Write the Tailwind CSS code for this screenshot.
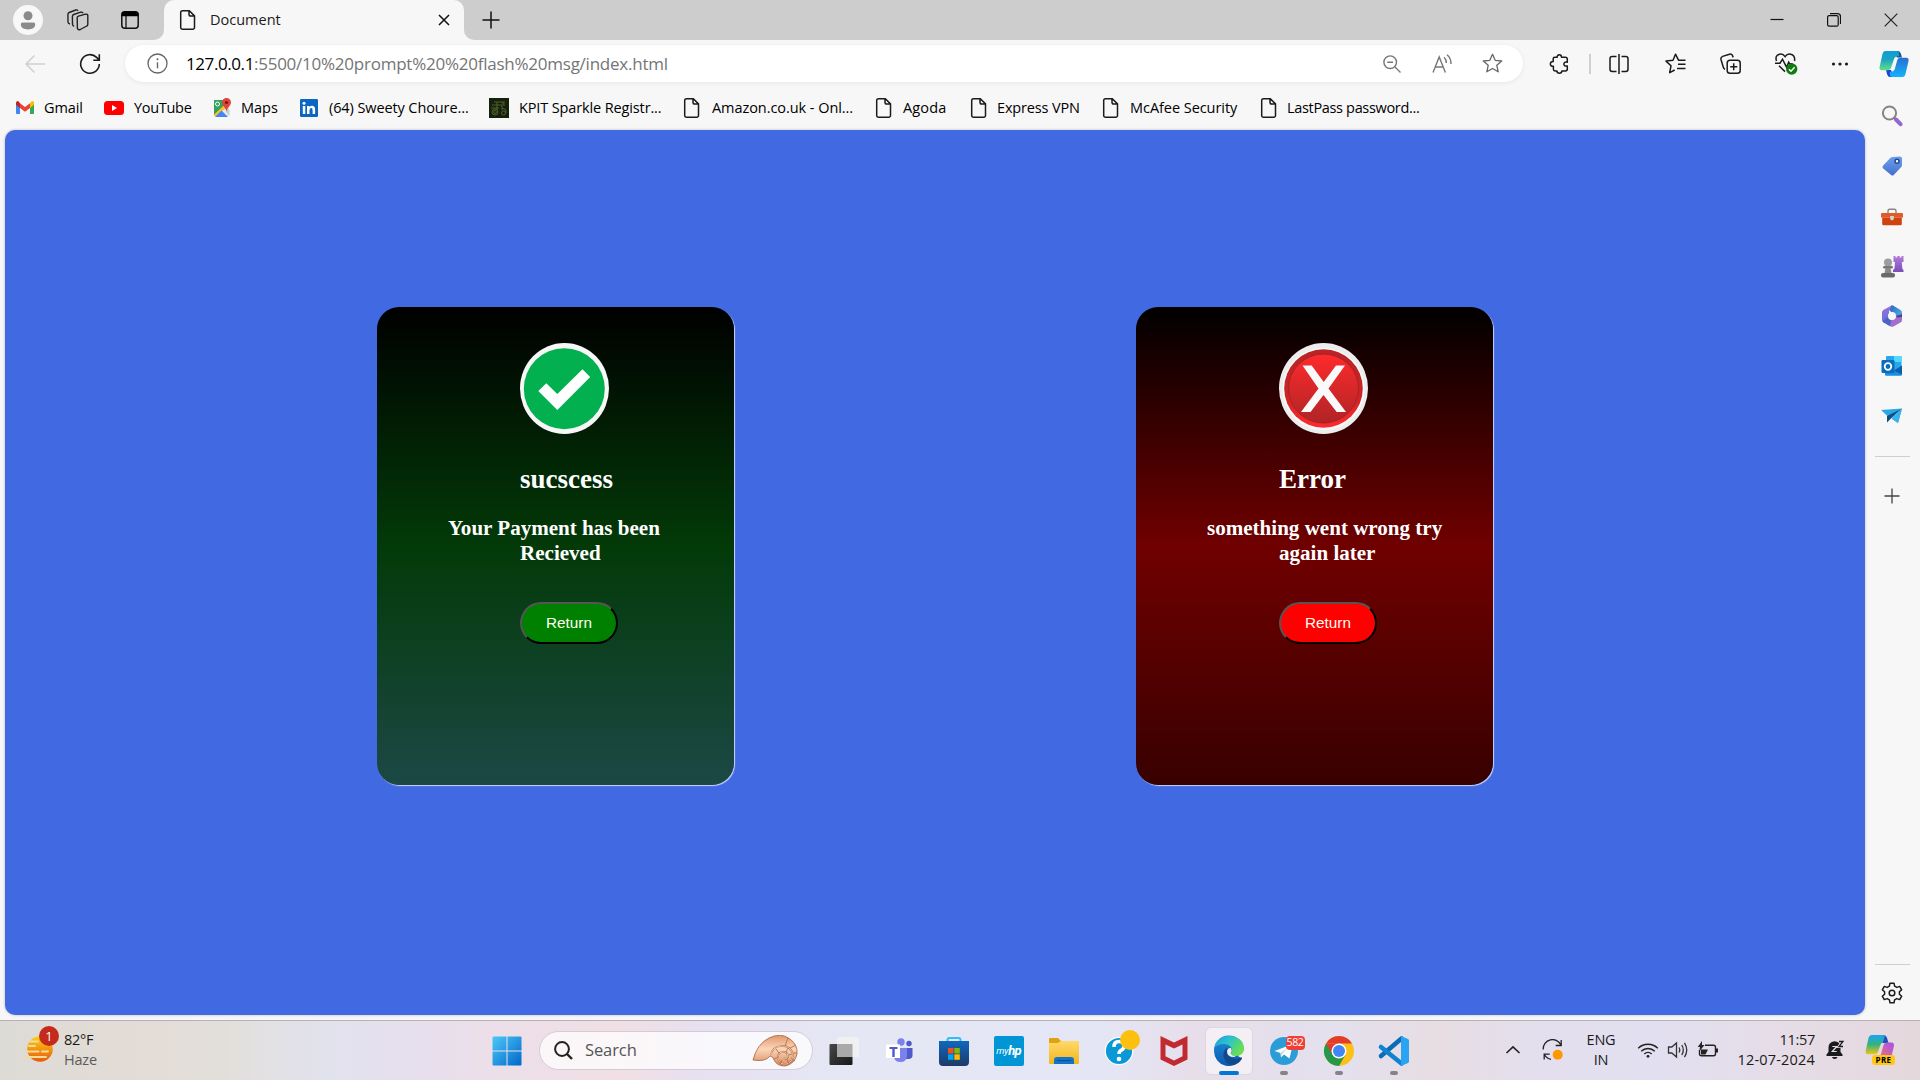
<!DOCTYPE html>
<html lang="en">
<head>
<meta charset="utf-8">
<title>Document</title>
<script src="https://cdn.jsdelivr.net/npm/@tailwindcss/browser@4"></script>
</head>
<body class="flex h-[1080px] w-[1920px] flex-col overflow-hidden bg-[#f7f7f7] font-['Open_Sans',sans-serif] text-[14.5px] text-[#1b1b1b]">

<svg class="hidden">
  <symbol id="doc" viewBox="0 0 20 22"><path d="M4.5 1.7h6.8l5.2 5.2v11.6a1.8 1.8 0 0 1-1.8 1.8H4.5a1.8 1.8 0 0 1-1.8-1.8v-15a1.8 1.8 0 0 1 1.8-1.8z M11 1.9v3.4a1.8 1.8 0 0 0 1.8 1.8h3.5" fill="none" stroke="#1b1b1b" stroke-width="1.5"/></symbol>
</svg>

<!-- Tab strip -->
<header class="flex h-10 shrink-0 bg-[#cdcdcd]">
  <div class="flex w-14 items-center justify-center">
    <svg class="size-[30px]" viewBox="0 0 30 30"><circle cx="15" cy="15" r="15" fill="#f8f8f8"/><circle cx="15" cy="10.7" r="4.5" fill="#8b8b8b"/><path d="M7.800 19.500a1.800 1.800 0 0 1 1.800-2h10.800a1.800 1.800 0 0 1 1.800 2c0 3.200-3.200 4.900-7.200 4.900s-7.200-1.700-7.200-4.900z" fill="#8b8b8b"/></svg>
  </div>
  <div class="flex w-11 items-center justify-center">
    <svg class="size-[22px]" viewBox="0 0 22 22" fill="none" stroke="#222" stroke-width="1.4" stroke-linejoin="round"><path d="M10.200 8.500q.2-1 1.200-1.300l7.200-2q2.100-.3 2.200 1.400v8.700q0 1.200-1 1.700l-6.500 3.500q-2.200.8-2.900-1z"/><path d="M7.200 17.300q-1.500-.4-1.700-1.800l-.1-8q0-1.500 1.300-2l7-2.300q1.700-.4 2.400 1"/><path d="M3 15q-1.900-.4-2-2l-.1-7.500q0-1.500 1.300-2l6.500-2.500q1.600-.4 2.300.8"/></svg>
  </div>
  <div class="flex w-[54px] items-center pl-[21px]">
    <svg class="size-[18px]" viewBox="0 0 18 18"><rect x=".8" y=".8" width="16.400" height="16.400" rx="3" fill="none" stroke="#111" stroke-width="1.500"/><path d="M.5 5.300V3.500a3 3 0 0 1 3-3h11a3 3 0 0 1 3 3v1.800z" fill="#000"/><path d="M5 5v12" stroke="#111" stroke-width="1.300"/></svg>
  </div>
  <svg class="size-2.5 self-end" viewBox="0 0 10 10"><path d="M10 0v10H0A10 10 0 0 0 10 0z" fill="#f7f7f7"/></svg>
  <div class="flex w-[300px] items-center rounded-t-[10px] bg-[#f7f7f7] pl-[14px]">
    <svg class="h-[22px] w-5"><use href="#doc"/></svg>
    <span class="ml-3 flex-1">Document</span>
    <svg class="mr-[14px] size-3" viewBox="0 0 12 12"><path d="M1 1l10 10M11 1L1 11" stroke="#111" stroke-width="1.500"/></svg>
  </div>
  <svg class="size-2.5 self-end" viewBox="0 0 10 10"><path d="M0 0v10h10A10 10 0 0 1 0 0z" fill="#f7f7f7"/></svg>
  <div class="flex w-[33px] items-center justify-center">
    <svg class="size-[18px]" viewBox="0 0 18 18"><path d="M9 .5v17M.5 9h17" stroke="#111" stroke-width="1.500"/></svg>
  </div>
  <div class="ml-auto flex">
    <div class="flex w-[57.3px] items-center justify-center"><svg class="size-3.5" viewBox="0 0 14 14"><path d="M.5 6.500h13" stroke="#111" stroke-width="1.200"/></svg></div>
    <div class="flex w-[57.3px] items-center justify-center"><svg class="size-3.5" viewBox="0 0 14 14" fill="none" stroke="#111" stroke-width="1.200"><rect x=".6" y="2.600" width="10.600" height="10.600" rx="1.500"/><path d="M3 .7h7.500q3 0 3 3V11"/></svg></div>
    <div class="flex w-[57.3px] items-center justify-center"><svg class="size-3.5" viewBox="0 0 14 14"><path d="M.7.7l12.600 12.600M13.300.7L.7 13.300" stroke="#222" stroke-width="1.200"/></svg></div>
  </div>
</header>

<!-- Toolbar -->
<div class="flex h-[47px] shrink-0 items-center">
  <div class="flex w-[70px] justify-center"><svg class="size-5" viewBox="0 0 20 20"><path d="M20 10H1M9.500 1.500L1 10l8.500 8.500" fill="none" stroke="#cfcfcf" stroke-width="1.500"/></svg></div>
  <div class="flex w-10 justify-center"><svg class="size-[22px]" viewBox="0 0 22 22"><path d="M20.300 11a9.300 9.300 0 1 1-2.700-6.600L20 6.800M20.300 1.200v6h-6" fill="none" stroke="#1b1b1b" stroke-width="1.600"/></svg></div>
  <div class="ml-[15px] flex h-[37px] w-[1398px] items-center rounded-full bg-white pr-[6px] pl-[22px] shadow-[0_1px_5px_rgba(0,0,0,0.07)]">
    <svg class="size-[21px]" viewBox="0 0 21 21"><circle cx="10.500" cy="10.500" r="9.500" fill="none" stroke="#666" stroke-width="1.300"/><path d="M10.500 9.300v6" stroke="#666" stroke-width="1.400"/><circle cx="10.500" cy="6.300" r="1" fill="#666"/></svg>
    <div class="ml-[18px] flex flex-1 text-[17px] leading-6"><span class="tracking-[-0.42px] text-black">127.0.0.1</span><span class="tracking-[-0.24px] text-[#757575]">:5500/10%20prompt%20%20flash%20msg/index.html</span></div>
    <div class="flex w-[50px] justify-center"><svg class="size-[18px]" viewBox="0 0 18 18" fill="none" stroke="#777" stroke-width="1.400"><circle cx="7.200" cy="7.200" r="6.300"/><path d="M12 12l5.500 5.500M4.300 7.200h5.800"/></svg></div>
    <div class="flex w-[50px] justify-center"><svg class="h-5 w-[22px]" viewBox="0 0 22 20" fill="none" stroke="#777" stroke-width="1.400"><path d="M2 18.500L8.200 3l6.200 15.500M4.300 13h7.800M13 3.200q2.500 2.300 2.300 5.800M16 .8q4.300 3.300 4 9.200"/></svg></div>
    <div class="flex w-[50px] justify-center"><svg class="size-[21px]" viewBox="0 0 21 21"><path d="M10.500 1.300l2.700 6 6.500.7-4.900 4.300 1.400 6.500-5.700-3.300-5.700 3.300 1.400-6.500L1.300 8l6.500-.7z" fill="none" stroke="#666" stroke-width="1.300" stroke-linejoin="round"/></svg></div>
  </div>
  <div class="flex w-[66px] pl-[26px]"><svg class="size-5" viewBox="0 0 20 20"><path d="M4.200 4.800q0-1.500 1.500-1.500h2.500q-.1-2.500 2.100-2.500t2.200 2.500h3.800q2 0 2 2v2.900q-3.400-.6-3.400 1.900t3.400 1.900v3q0 1.900-1.900 1.900h-3.500q-.1 2.300-2.500 2.300t-2.500-2.300H6.100q-1.700 0-1.700-1.700v-2.900Q1.400 12.500 1.400 10t2.800-2.400z" fill="none" stroke="#1b1b1b" stroke-width="1.500" stroke-linejoin="round"/></svg></div>
  <div class="h-5 w-[2px] bg-[#d0d0d0]"></div>
  <div class="flex w-[57px] justify-center"><svg class="-ml-px size-5" viewBox="0 0 20 20" fill="none" stroke="#1b1b1b" stroke-width="1.500"><path d="M7.500 2.500H3.200Q1 2.500 1 4.700v10.600q0 2.200 2.200 2.200h4.300M12.500 2.500h4.300q2.200 0 2.200 2.200v10.600q0 2.200-2.200 2.200h-4.300M10 0v20"/></svg></div>
  <div class="flex w-[55px] justify-center"><svg class="-ml-px size-[21px]" viewBox="0 0 21 21" fill="none" stroke="#1b1b1b" stroke-width="1.500" stroke-linejoin="round"><path d="M20.500 7.200h-7L10.500 1.200 8 7.200l-7 .9 5 4.700-1.300 6.900 5-2.700M13 11.200h7.500M12 15.500h8.500"/></svg></div>
  <div class="flex w-[55px] justify-center"><svg class="-ml-px size-[21px]" viewBox="0 0 21 21" fill="none" stroke="#1b1b1b" stroke-width="1.500"><rect x="7.200" y="7.200" width="13" height="13" rx="2.800"/><path d="M13.700 10.200v7M10.200 13.700h7M5 16.200q-1.300-.5-1.700-2L1 6.500Q.5 4.200 2.600 3.400L9.500 1.200q2-.5 2.900 1.200l.8 2"/></svg></div>
  <div class="flex w-[55px] justify-center"><svg class="size-6" viewBox="0 0 24 24"><path d="M2.500 9Q.7 3.500 5.500 2.200q3.500-.7 5.600 2.500 2.100-3.200 5.600-2.500Q21.500 3.500 20.500 9M5 13.800l6 5.800M1 11.200h5l2.500-4 4 8 2.200-5 1 1.600h3" fill="none" stroke="#1b1b1b" stroke-width="1.500"/><circle cx="17.700" cy="17" r="5.700" fill="#107c10"/><path d="M15 17.200l2 2 3.600-4" fill="none" stroke="#fff" stroke-width="1.500"/></svg></div>
  <div class="flex w-[55px] justify-center"><svg class="-ml-px size-5" viewBox="0 0 20 20" fill="#1b1b1b"><circle cx="3.500" cy="10" r="1.600"/><circle cx="10" cy="10" r="1.600"/><circle cx="16.500" cy="10" r="1.600"/></svg></div>
  <div class="flex w-[52px] justify-center"><svg class="-ml-px h-7 w-[30px]" viewBox="0 0 30 28">
    <defs>
      <linearGradient id="ca" x1="0" y1="0" x2="0" y2="1"><stop offset="0" stop-color="#109ad9"/><stop offset=".45" stop-color="#1ba5c0"/><stop offset="1" stop-color="#63e08a"/></linearGradient>
      <linearGradient id="cb" x1="0" y1="0" x2="0" y2="1"><stop offset="0" stop-color="#2a6fd0"/><stop offset="1" stop-color="#14b4fb"/></linearGradient>
    </defs>
    <path d="M14 1h5q2 0 2.800 2.500l1.200 4h-5z" fill="#0d5c94"/><path d="M7 20h5l2.500 7H11q-2 0-2.800-2.500z" fill="#1b45dc"/>
    <path d="M6.500 1H18q1.500 0 1.800 1.500L20 6q-4 0-5 3l-3 9q-.8 2.200-3 2.200H2.500Q0 20 .6 17L3.500 4q.7-3 3-3z" fill="url(#ca)"/>
    <path d="M23.500 27H13q-1.500 0-2-1.500L10.800 22q4 0 5-3l2.500-9q.8-2.200 3-2.200h6q2.700 0 2.200 3.200L26.500 24q-.7 3-3 3z" fill="url(#cb)"/>
  </svg></div>
</div>

<!-- Bookmarks, page and sidebar -->
<div class="flex h-[933px] shrink-0">
  <div class="flex w-[1865px] flex-col">
    <nav class="flex h-[43px] shrink-0 items-center pb-[2px] pl-[15px] whitespace-nowrap text-black">
      <div class="flex w-[89px] items-center"><svg class="h-[15px] w-5" viewBox="0 0 20 15"><path d="M1 2.500v10.700q0 .8.800.8H5V7.500z" fill="#4285f4"/><path d="M19 2.500v10.700q0 .8-.8.8H15V7.500z" fill="#34a853"/><path d="M15 3.200l1.300-1.600Q17.500.7 18.500 1.500q.5.500.5 1.500v1.800L15 8z" fill="#fbbc04"/><path d="M5 8V3.200l5 3.700 5-3.700V8l-5 3.800z" fill="#ea4335"/><path d="M1 3q0-1 .6-1.500Q2.500.7 3.700 1.600L5 3.200V8L1 4.800z" fill="#c5221f"/></svg><span class="ml-[9px] tracking-[-0.1px]">Gmail</span></div>
      <div class="flex w-[108px] items-center"><svg class="h-3.5 w-5" viewBox="0 0 20 14"><rect width="20" height="14" rx="3.500" fill="#f00"/><path d="M8 4l5 3-5 3z" fill="#fff"/></svg><span class="ml-[10px] tracking-[-0.3px]">YouTube</span></div>
      <div class="flex w-[87px] items-center"><svg class="size-5" viewBox="0 0 20 20"><path d="M2 2h11v6l-11 10z" fill="#34a05c"/><path d="M2 18L13 8l4 2v8z" fill="#e8e8e8"/><path d="M1.500 17L14 5.500l2 2.500L4 18.500z" fill="#fbc02d"/><path d="M3 19l6.500-6.500L16 19z" fill="#4285f4"/><path d="M14 14V8l3.500 4v6z" fill="#c6cfd8"/><circle cx="5.500" cy="6" r="2" fill="none" stroke="#fff" stroke-width="1"/><path d="M14.500 0a4.500 4.500 0 0 1 4.500 4.500c0 3-3.500 4.500-4.500 9-1-4.500-4.500-6-4.500-9A4.500 4.500 0 0 1 14.500 0z" fill="#e0443a"/><circle cx="14.500" cy="4.500" r="1.600" fill="#811411"/></svg><span class="ml-[9px]">Maps</span></div>
      <div class="flex w-[190px] items-center pl-px"><svg class="size-[18px]" viewBox="0 0 18 18"><rect width="18" height="18" rx="1.200" fill="#0a66c2"/><path d="M2.800 7h2.500v8H2.800zM7 7h2.400v1.100q.8-1.300 2.500-1.300 3.200 0 3.200 3.700V15h-2.500v-4q0-2-1.400-2T9.500 11v4H7z" fill="#fff"/><circle cx="4" cy="4.200" r="1.500" fill="#fff"/></svg><span class="ml-[11px] tracking-[-0.1px]">(64) Sweety Choure...</span></div>
      <div class="flex w-[194px] items-center"><svg class="size-5" viewBox="0 0 20 20"><rect width="20" height="20" fill="#17200f"/><g fill="none" stroke="#58702a" stroke-width=".8"><circle cx="6" cy="14" r="3"/><circle cx="6" cy="14" r="1.500"/><circle cx="14.500" cy="15" r="2"/><path d="M3 7h10v5M5 4h9v3M8 4v8M13 10l4 2v3M2 10h8M15 3v5"/></g></svg><span class="ml-[10px] tracking-[-0.13px]">KPIT Sparkle Registr...</span></div>
      <div class="flex w-[192px] items-center"><svg class="-ml-px h-[22px] w-5"><use href="#doc"/></svg><span class="ml-[10px] tracking-[-0.06px]">Amazon.co.uk - Onl...</span></div>
      <div class="flex w-[95px] items-center"><svg class="-ml-px h-[22px] w-5"><use href="#doc"/></svg><span class="ml-[9px] tracking-[0.15px]">Agoda</span></div>
      <div class="flex w-[132px] items-center"><svg class="-ml-px h-[22px] w-5"><use href="#doc"/></svg><span class="ml-[8px] tracking-[-0.15px]">Express VPN</span></div>
      <div class="flex w-[158px] items-center"><svg class="-ml-px h-[22px] w-5"><use href="#doc"/></svg><span class="ml-[9px] tracking-[-0.05px]">McAfee Security</span></div>
      <div class="flex items-center"><svg class="-ml-px h-[22px] w-5"><use href="#doc"/></svg><span class="ml-[8px] tracking-[-0.33px]">LastPass password...</span></div>
    </nav>

    <main class="ml-[5px] flex h-[885px] items-start gap-[402px] rounded-[10px] bg-[royalblue] pt-[177px] pl-[372px] font-['Liberation_Serif',serif] font-bold text-white shadow-[0_0_3px_rgba(0,0,0,0.25)]">
      <section class="h-[478px] w-[357px] rounded-[22px] bg-linear-to-b/srgb from-black via-[#033a08] to-[#1c4845] pt-[35.500px] pl-[143px] shadow-[1px_1px_1px_#cdd7f8]">
        <svg class="h-[91px] w-[89px]" viewBox="0 0 89 91"><ellipse cx="44.500" cy="45.500" rx="44.500" ry="45.500" fill="#f7f7f7"/><ellipse cx="44.300" cy="45.700" rx="40.500" ry="40.500" fill="#03b050"/><path d="M18.300 48l8-7.800L37.300 51 62.500 26.200l7.700 7.700L37.300 67z" fill="#fff"/></svg>
        <h1 class="mt-[30.500px] text-[27px] leading-[31px]">sucscess</h1>
        <h3 class="mt-[21px] w-[160px] -indent-[72px] text-[21.06px] leading-[25px]"><span class="whitespace-nowrap">Your Payment has been</span><br>Recieved</h3>
        <button class="mt-[36px] h-[42px] w-[98px] rounded-[22px] border-2 border-t-[#555] border-r-black border-b-black border-l-[#555] bg-[green] font-['Liberation_Sans',sans-serif] text-[15.3px] font-normal text-[#fffff0]">Return</button>
      </section>
      <section class="h-[478px] w-[357px] rounded-[22px] bg-linear-to-b/srgb from-black via-[#700000] to-[#380000] pt-[35.500px] pl-[143px] shadow-[1px_1px_1px_#cdd7f8]">
        <svg class="h-[91px] w-[89px]" viewBox="0 0 89 91">
          <defs>
            <linearGradient id="er" x1="0" y1="0" x2="0" y2="1"><stop offset="0" stop-color="#b82426"/><stop offset=".6" stop-color="#cc2426"/><stop offset="1" stop-color="#ff2a2a"/></linearGradient>
            <linearGradient id="ei" x1="0" y1="0" x2="0" y2="1"><stop offset="0" stop-color="#ff2a2c"/><stop offset="1" stop-color="#b02426"/></linearGradient>
          </defs>
          <ellipse cx="44.500" cy="45.500" rx="44.500" ry="45.500" fill="#ededed"/><ellipse cx="44.500" cy="46" rx="41" ry="41" fill="#fafafa"/><ellipse cx="44.500" cy="45.500" rx="39.300" ry="39.300" fill="url(#er)"/><ellipse cx="44.500" cy="45.500" rx="35" ry="34.500" fill="url(#ei)" stroke="#a82224" stroke-width="1"/>
          <path d="M23.500 22.500h9.200l12 16.500L57 22.500h9L49.500 45.500 67 69h-9.300L44.500 52 31.500 69H22L39.500 45.500z" fill="#fafafa"/>
        </svg>
        <h1 class="mt-[30.500px] text-[27px] leading-[31px]">Error</h1>
        <h3 class="mt-[21px] w-[160px] -indent-[72px] text-[21.06px] leading-[25px]"><span class="whitespace-nowrap">something went wrong try</span><br><span class="whitespace-nowrap">again later</span></h3>
        <button class="mt-[36px] h-[42px] w-[98px] rounded-[22px] border-2 border-t-[#555] border-r-black border-b-black border-l-[#555] bg-[red] font-['Liberation_Sans',sans-serif] text-[15.3px] font-normal text-[#fffff0]">Return</button>
      </section>
    </main>
  </div>

  <!-- Sidebar -->
  <aside class="flex w-[55px] flex-col items-center pt-[4px] pr-px">
    <div class="flex h-[50px] items-center"><svg class="size-[22px]" viewBox="0 0 22 22"><circle cx="8.500" cy="8" r="6.600" fill="none" stroke="#858585" stroke-width="2"/><path d="M13 12.500l2.500 2.500" stroke="#777" stroke-width="2"/><path d="M15 14.500l4.500 4.700" stroke="#9566cf" stroke-width="4" stroke-linecap="round"/></svg></div>
    <div class="flex h-[50px] items-center"><svg class="size-[22px]" viewBox="0 0 22 22"><defs><linearGradient id="tg" x1="0" y1="0" x2="0" y2="1"><stop offset="0" stop-color="#6ba0ec"/><stop offset="1" stop-color="#456fcd"/></linearGradient></defs><path d="M11.500 2l7.500-.5q2 0 2 2V10q0 1-.8 2l-7.500 8q-1.300 1.200-2.600 0L2.200 13.500q-1.400-1.300-.2-2.700l7.500-8q.9-.8 2-.8z" fill="url(#tg)"/><circle cx="16" cy="6.300" r="2" fill="#fff" stroke="#24468f" stroke-width="1.500"/></svg></div>
    <div class="flex h-[50px] items-center"><svg class="mt-px size-[22px]" viewBox="0 0 22 22"><path d="M7 8V5q0-1.700 1.700-1.700h4.600Q15 3.300 15 5v3" fill="none" stroke="#858585" stroke-width="1.400"/><path d="M1 7h20q1 0 1 1v3.500H0V8q0-1 1-1z" fill="#e2592a"/><path d="M1.200 11.500h19.600v6.300q0 1.500-1.500 1.500H2.700q-1.500 0-1.500-1.500z" fill="#cf430f"/><path d="M9.200 10h3.600v3.200l-1.800 1.300-1.800-1.300z" fill="#d5d5d5"/></svg></div>
    <div class="flex h-[50px] items-center"><svg class="mt-px size-6" viewBox="0 0 24 24"><defs><linearGradient id="rk" x1="0" y1="0" x2="0" y2="1"><stop offset="0" stop-color="#b47bdc"/><stop offset="1" stop-color="#7a4fb8"/></linearGradient></defs><path d="M13.500 1h2v1.500h1.800V1h2.400v1.500h1.800V1h2v6h-1.700l.5 6.500 1.200 1.500v2H13v-2l1.500-1.500L15 7h-1.500z" fill="url(#rk)"/><circle cx="8" cy="7.500" r="4" fill="#9d9d9d"/><rect x="3" y="11" width="10" height="2.500" rx="1.200" fill="#777"/><path d="M5.500 13h5l1 5h-7z" fill="#8a8a8a"/><rect x="1" y="18" width="14" height="4.500" rx="2" fill="#6a6a6a"/></svg></div>
    <div class="flex h-[50px] items-center"><svg class="size-[22px]" viewBox="0 0 22 22"><defs><linearGradient id="m1" x1="0" y1="0" x2="1" y2="1"><stop offset="0" stop-color="#2f5fc0"/><stop offset="1" stop-color="#4fc3f4"/></linearGradient><linearGradient id="m2" x1="0" y1="0" x2="0" y2="1"><stop offset="0" stop-color="#9c6fdd"/><stop offset="1" stop-color="#5f6fd6"/></linearGradient></defs><path d="M10.500.3q.7-.2 1.500.2l7.500 4.500q1.500 1 1.500 2.500v8l-6.500-4.500L8 5z" fill="url(#m1)"/><path d="M10.500.4L8 5.500V13l1.500 7.500L2.500 17Q1 16 1 14.500v-7q0-1.500 1.300-2.500z" fill="url(#m2)"/><path d="M1.500 16l8.500-1 5-3 6-1v4q0 1.500-1.500 2.500l-7 4q-1.500.7-3 0l-7-4z" fill="#a070cf"/><path d="M1.300 16L8 11.500l2 4-1 5.500-6.500-3.800z" fill="#4a63c9"/><path d="M15 11l6-2v3l-5 .5z" fill="#5a3f8f"/><circle cx="11" cy="11" r="4" fill="#f7f7f7"/></svg></div>
    <div class="flex h-[50px] items-center"><svg class="size-[22px]" viewBox="0 0 22 22"><rect x="5" y="1" width="15.500" height="14" rx="1.200" fill="#28a8ea"/><path d="M13 1h7.500v6H13z" fill="#50d9ff"/><path d="M4 11l8.500 5L21 10.500v9q0 1.300-1.300 1.300H5.300Q4 20.800 4 19.500z" fill="#1490df"/><path d="M21 10.500v9L13 15.500z" fill="#0b5fa8"/><rect x=".5" y="5" width="13" height="13" rx="1.300" fill="#0a6cbd"/><circle cx="7" cy="11.500" r="3.300" fill="none" stroke="#fff" stroke-width="1.800"/></svg></div>
    <div class="flex h-[50px] items-center"><svg class="h-4 w-[22px]" viewBox="0 0 22 16"><path d="M0 2L21 .5 7.500 9z" fill="#2ba7e6"/><path d="M21 .5L17 15l-6-4z" fill="#1d9be0"/><path d="M21 .5L6 8v6.500l4-4z" fill="#0c4f84"/><path d="M10.500 10L21 .5 17 15z" fill="#35b4f0"/></svg></div>
    <div class="mt-[15px] h-px w-[35px] bg-[#cfcfcf]"></div>
    <svg class="mt-[31px] size-4" viewBox="0 0 16 16"><path d="M8 .5v15M.5 8h15" stroke="#444" stroke-width="1.300"/></svg>
    <div class="mt-auto h-px w-[35px] bg-[#cfcfcf]"></div>
    <svg class="mt-[17px] mb-[16px] size-[22px]" viewBox="0 0 22 22" fill="none" stroke="#1b1b1b" stroke-width="1.500" stroke-linejoin="round"><path d="M9 1.200h4l.6 3 2.200 1.200 2.900-1 2 3.400-2.300 2v2.400l2.300 2-2 3.400-2.900-1-2.200 1.200-.6 3H9l-.6-3-2.200-1.200-2.900 1-2-3.400 2.300-2V9.800l-2.300-2 2-3.400 2.900 1 2.200-1.200z"/><circle cx="11" cy="11" r="2.800"/></svg>
  </aside>
</div>

<!-- Taskbar -->
<footer class="flex h-[60px] items-center border-t border-[#b4b2b5] bg-[linear-gradient(90deg,#dddbd6_0px,#e4dcd6_150px,#e2dfda_220px,#e2e2ee_330px,#e6dfee_410px,#ecdfe9_490px,#f1dfe4_620px,#e7e0f0_700px,#e5e7f5_850px,#e4e6f5_1100px,#e7deea_1190px,#e4e0ee_1340px,#e7dde2_1440px,#e3dfee_1540px,#e2dff0_1660px,#e6dce6_1800px,#e4d8dc_1920px)]">
  <div class="flex w-[492px] items-center pb-px pl-[24px]">
    <div class="relative h-12 w-[40px]">
      <svg class="h-12 w-9" viewBox="0 0 36 48"><defs><linearGradient id="sun" x1="0" y1="0" x2="0" y2="1"><stop offset="0" stop-color="#fcd116"/><stop offset="1" stop-color="#e8590c"/></linearGradient></defs><circle cx="16" cy="23" r="12.800" fill="url(#sun)"/><g stroke="#f6dc9a" stroke-width="1.900" stroke-linecap="round"><path d="M6 15.500h8M5 20h6M2.500 25.500h12M18 25.500h6M2 31h20"/></g></svg>
      <div class="absolute top-0 left-[15px] flex size-5 items-center justify-center rounded-full bg-[#c42b1c] text-[13px] leading-none text-white">1</div>
    </div>
    <div class="-mt-px leading-5"><div class="tracking-[-0.3px]">82°F</div><div class="tracking-[-0.2px] text-[#5a5a5a]">Haze</div></div>
  </div>
  <svg class="size-[30px]" viewBox="0 0 30 30"><defs><linearGradient id="win" x1="0" y1="0" x2="1" y2="1"><stop offset="0" stop-color="#4cc9fa"/><stop offset="1" stop-color="#0067c8"/></linearGradient></defs><path d="M1.500.5H14.500V14.500H.5V1.500q0-1 1-1zM15.500.5h13q1 0 1 1v13h-14zM.5 15.500h14v14h-13q-1 0-1-1zM15.500 15.500h14v13q0 1-1 1h-13z" fill="url(#win)"/></svg>
  <div class="ml-[17px] flex h-[39px] w-[274px] items-center rounded-full border border-[#d3ccd6] bg-white/75 pl-[14px]">
    <svg class="size-[19px]" viewBox="0 0 19 19"><circle cx="8" cy="8" r="6.900" fill="none" stroke="#222" stroke-width="2"/><path d="M13 13l5 5" stroke="#222" stroke-width="2.400"/></svg>
    <span class="ml-3 flex-1 text-[16.5px] tracking-[-0.1px] text-[#555]">Search</span>
    <svg class="mr-[14px] h-8 w-[46px]" viewBox="0 0 46 32"><defs><linearGradient id="sh" x1="0" y1="0" x2="0" y2="1"><stop offset="0" stop-color="#e0976c"/><stop offset=".45" stop-color="#fbd6b8"/><stop offset="1" stop-color="#d98a60"/></linearGradient></defs><path d="M1 25Q5 9 17 3T38 4q8 6 7 15-2 10-12 12-8 0-11-6-1-4-4-4-4 6-17 4z" fill="url(#sh)" stroke="#a8623c" stroke-width=".8"/><path d="M19 20Q20 12 29 11t12 8q0 8-6 10-7 1-9-5-1-6 4-7t6 4q-1 4-4 2" fill="none" stroke="#a85b37" stroke-width="1.600"/><path d="M19 20Q20 12 29 11t12 8q0 8-6 10-7 1-9-5-1-6 4-7t6 4q-1 4-4 2" fill="none" stroke="#fdecd8" stroke-width=".8"/><path d="M33 11l3-8M38 13l6-3M41 18h4M40 24l3 2M35 24l2 5M30 25l-2 4M26 22l-4 2M27 18l-3-4M34 17l2-4M37 20l3-1" stroke="#b0683f" stroke-width=".8"/></svg>
  </div>

  <div class="ml-[3px] flex h-full items-center">
    <div class="flex w-[55px] justify-center"><svg class="size-12" viewBox="0 0 48 48"><defs><linearGradient id="tv" x1="0" y1="0" x2="1" y2="1"><stop offset="0" stop-color="#474747"/><stop offset="1" stop-color="#181818"/></linearGradient></defs><rect x="9.500" y="17" width="23" height="21" rx="1" fill="url(#tv)"/><rect x="17" y="10" width="22" height="20" rx="1" fill="#f0f0f0"/><path d="M17 17h15.500v13H18q-1 0-1-1z" fill="#a9a9a9"/></svg></div>
    <div class="flex w-[55px] justify-center"><svg class="size-12" viewBox="0 0 48 48"><circle cx="26" cy="15" r="3.700" fill="#7b83eb"/><circle cx="34" cy="16.500" r="2.700" fill="#5059c9"/><path d="M29 21h8.500v7.500q0 3-3.500 3.500h-5z" fill="#5059c9"/><path d="M19 21h13v8q-.5 6-6.500 6T19 30z" fill="#7b83eb"/><rect x="11" y="17.500" width="14" height="13.500" fill="#fff"/><path d="M14.500 20h8v2h-2.800v8h-2.400v-8h-2.800z" fill="#5059c9"/></svg></div>
    <div class="flex w-[55px] justify-center"><svg class="size-12" viewBox="0 0 48 48"><defs><linearGradient id="st" x1="0" y1="0" x2="0" y2="1"><stop offset="0" stop-color="#0f68bf"/><stop offset="1" stop-color="#1c3a66"/></linearGradient></defs><path d="M17.500 16v-3q0-2 2-2h9q2 0 2 2v3" fill="none" stroke="#2cc0f5" stroke-width="2"/><path d="M9 14h30v21q0 4-4 4H13q-4 0-4-4z" fill="url(#st)"/><path d="M18 21h5.500v5.500H18z" fill="#f25022"/><path d="M24.300 21h5.500v5.500h-5.500z" fill="#7fba00"/><path d="M18 27.300h5.500v5.500H18z" fill="#00a4ef"/><path d="M24.300 27.300h5.500v5.500h-5.500z" fill="#ffb900"/></svg></div>
    <div class="flex w-[55px] justify-center"><div class="flex size-[30px] items-center justify-center rounded-[2px] bg-[#0096d6] font-['Roboto',sans-serif] text-[9.5px] leading-none tracking-[-0.3px] text-white italic">my<span class="text-[13px] font-bold tracking-[-0.8px]">hp</span></div></div>
    <div class="flex w-[55px] justify-center"><svg class="size-12" viewBox="0 0 48 48"><defs><linearGradient id="fo" x1="0" y1="0" x2="0" y2="1"><stop offset="0" stop-color="#ffd968"/><stop offset="1" stop-color="#f3b51d"/></linearGradient></defs><path d="M9 12q0-1 1-1h8l3 3h17v6H9z" fill="#e0a30f"/><path d="M9 16h9l3-2h17q1 0 1 1v21q0 1-1 1H10q-1 0-1-1z" fill="url(#fo)"/><path d="M14 37v-4q0-3 3-3h14q3 0 3 3v4z" fill="#1273c9"/><path d="M17 33.500h14" stroke="#0a4f8f" stroke-width="1"/></svg></div>
    <div class="flex w-[55px] justify-center"><div class="relative size-12"><svg class="size-12" viewBox="0 0 48 48"><circle cx="24" cy="24" r="13.700" fill="#0a98d6" stroke="#fff" stroke-width="1.200"/><path d="M19 20q0-5.500 5-5.500t5 4.500q0 3-2.600 4.200-2.400 1.100-2.400 3.800" fill="none" stroke="#fff" stroke-width="3.600"/><circle cx="24" cy="32" r="2.300" fill="#fff"/></svg><div class="absolute top-[3px] left-[25px] size-5 rounded-full bg-[#fdc00f]"></div></div></div>
    <div class="flex w-[55px] justify-center"><svg class="size-12" viewBox="0 0 48 48"><path d="M10.500 9L24 15.500 37.500 9v23.500L24 39 10.500 32.500z" fill="#c12b30"/><path d="M15.500 17.500L24 21.500l8.500-4v11.800L24 33.500l-8.500-4.200z" fill="#e6e1ef"/></svg></div>
    <div class="flex w-[55px] justify-center"><div class="relative size-12 rounded-md border border-[#ddd8e0] bg-[#f4eff5]"><svg class="-mt-px -ml-px size-12" viewBox="0 0 48 48"><defs><linearGradient id="ed" x1="0" y1="0" x2="1" y2=".5"><stop offset="0" stop-color="#1f9be0"/><stop offset=".5" stop-color="#2cc4c9"/><stop offset="1" stop-color="#6be04c"/></linearGradient><linearGradient id="ee" x1="0" y1="0" x2="0" y2="1"><stop offset="0" stop-color="#1a8fdc"/><stop offset="1" stop-color="#0c58ac"/></linearGradient></defs><path d="M9 24a15 15 0 0 1 30-1L33 29l4 2.500A15 15 0 0 1 9 24z" fill="url(#ee)"/><path d="M9.500 20.500Q12 9 24 9q15 .5 15 13.500-.8 6.500-8 6.500-6 0-5.500-3 1.800-1.300 1.500-3.500-1-5-8-5.500-6 0-9.500 3.500z" fill="url(#ed)"/><path d="M22.500 20.500q-5 3-4 9Q20.500 38 29 38q5-1.300 8-6.500.5-1.500-1-1-6 2.500-11-.5-4-3.500-2.500-9.500z" fill="#114a8b"/><path d="M22 24q1-3.500 4-3 1.500 2.500-.5 5 .5 3 5.500 3l-2 1q-7 0-7-6z" fill="#f4eff5"/></svg><div class="absolute -bottom-px left-[13px] h-1 w-5 rounded-full bg-[#0078d4]"></div></div></div>
    <div class="flex w-[55px] justify-center"><div class="relative size-12"><svg class="size-12" viewBox="0 0 48 48"><circle cx="24" cy="24" r="14" fill="#2a9dd8"/><path d="M14.500 24L33 17l-3.500 14.500-5.500-4-3 3-.5-4.500z" fill="#fff"/><path d="M20.500 26l8-6-6.500 7-1 3.500z" fill="#b9d9ec"/></svg><div class="absolute top-[9px] left-[26px] flex h-3.5 w-[19px] items-center justify-center rounded-[4px] bg-[#f03e35] text-[10.500px] leading-none tracking-[-0.3px] text-white">582</div><div class="absolute bottom-0 left-5 h-1 w-2 rounded-full bg-[#868388]"></div></div></div>
    <div class="flex w-[55px] justify-center"><div class="relative size-12"><svg class="size-12" viewBox="0 0 48 48"><circle cx="24" cy="24" r="15" fill="#fbc116"/><path d="M24 24L11 16.500A15 15 0 0 0 24 39l6.500-11.300z" fill="#279847"/><path d="M11 16.500A15 15 0 0 1 37 16.500H24z" fill="#e33b2e"/><path d="M11 16.500l6.500 11.300L24 16.500z" fill="#e33b2e"/><circle cx="24" cy="24" r="7.500" fill="#fff"/><circle cx="24" cy="24" r="6" fill="#4285f4"/></svg><div class="absolute bottom-0 left-5 h-1 w-2 rounded-full bg-[#868388]"></div></div></div>
    <div class="flex w-[55px] justify-center"><div class="relative size-12"><svg class="size-12" viewBox="0 0 48 48" fill="none"><path d="M11 29L31.500 11.500" stroke="#0a6db8" stroke-width="4.600" stroke-linecap="round"/><path d="M11 20L31.500 36.500" stroke="#0f83cf" stroke-width="4.600" stroke-linecap="round"/><path d="M31 9l7 3q1 .5 1 1.700v20.600q0 1.200-1 1.700l-7 3z" fill="#2aa3f0"/></svg><div class="absolute bottom-0 left-5 h-1 w-2 rounded-full bg-[#868388]"></div></div></div>
  </div>

  <div class="ml-[84px] flex h-full flex-1 items-center pb-px">
    <svg class="h-2.5 w-4" viewBox="0 0 16 10"><path d="M1.500 8L8 1.800 14.500 8" fill="none" stroke="#222" stroke-width="1.600"/></svg>
    <svg class="ml-[21px] size-[22px]" viewBox="0 0 22 22"><path d="M1.200 10.500A9.300 9.300 0 0 1 19 6.200M19.200 1v5.500h-5.500M9 20.300a9 9 0 0 1-6.500-4.500M2.200 20.500v-5.300h5.500" fill="none" stroke="#222" stroke-width="1.300"/><circle cx="15.700" cy="15.800" r="5" fill="#ff9800"/></svg>
    <div class="ml-[17px] w-10 text-center leading-5 tracking-[-0.2px]"><div>ENG</div><div>IN</div></div>
    <svg class="ml-[16px] h-[18px] w-[22px]" viewBox="0 0 22 18" fill="none" stroke="#222" stroke-width="1.400"><path d="M1.200 7.200a14 14 0 0 1 19.600 0M4.200 10.200a9.800 9.800 0 0 1 13.600 0M7.300 13a5.500 5.500 0 0 1 7.400 0"/><circle cx="11" cy="15.300" r="1.400" fill="#222" stroke="none"/></svg>
    <svg class="ml-[8px] h-[18px] w-[22px]" viewBox="0 0 22 18" fill="none" stroke="#333" stroke-width="1.300"><path d="M1.500 6h3.300L9.500 2v14l-4.700-4H1.500zM12 6.500q1.500 2.500 0 5M14.800 4q3 5 0 10M17.500 1.800q4.500 7.200 0 14.400"/></svg>
    <svg class="ml-[8px] h-[18px] w-[22px]" viewBox="0 0 22 18"><path d="M8 4.200h8.500q2 0 2 2v6.600q0 2-2 2h-12q-2 0-2-2V9" fill="none" stroke="#222" stroke-width="1.400"/><path d="M20 7.500v4" stroke="#222" stroke-width="2"/><path d="M4 8.500h7l-2.500 5H4zM5 0L.8 6H3l-.7 4.500L7.500 4H5z" fill="#222"/></svg>
    <div class="ml-[6px] w-[90px] text-right leading-5"><div class="tracking-[-0.3px]">11:57</div><div class="tracking-[0.18px]">12-07-2024</div></div>
    <svg class="ml-[11px] size-[20px]" viewBox="0 0 20 20"><path d="M.5 14.500L2.500 12V7.500q0-5.500 6-6.300Q14 1.500 14.500 7v5l2 2.500v1.500H.5zM6 17h5.500q-.5 2-2.800 2T6 17z" fill="#1b1b1b"/><path d="M6.300 6.500h4.400l-4.400 5h4.400" fill="none" stroke="#e4dee9" stroke-width="1.200"/><path d="M13 1.500h4l-4 5h4" fill="none" stroke="#e4dee9" stroke-width="3"/><path d="M13 1.500h4l-4 5h4" fill="none" stroke="#1b1b1b" stroke-width="1.300"/></svg>
    <div class="relative ml-[19px] h-[30px] w-[30px]">
      <svg class="h-[28px] w-[30px]" viewBox="0 0 30 28"><defs><linearGradient id="pa" x1="0" y1="0" x2="0" y2="1"><stop offset="0" stop-color="#18a5f5"/><stop offset=".5" stop-color="#37b27c"/><stop offset="1" stop-color="#f0c419"/></linearGradient><linearGradient id="pb" x1="1" y1="0" x2="0" y2="1"><stop offset="0" stop-color="#a450f0"/><stop offset="1" stop-color="#ff7a5c"/></linearGradient></defs><path d="M13 0h5q3 0 4 3l1.500 5h-6z" fill="#1c4fc4"/><path d="M7 0h11q1.500 0 1.800 1.500L18 7q-2 1-3 4l-2 6q-.8 2.200-3 2.200H3Q0 19 .8 15.500L3.500 3Q4.300 0 7 0z" fill="url(#pa)"/><path d="M22 27H12l4-8 2.500-9q.8-2.500 3-2.500h5q3 0 2.400 3.500L26 24z" fill="url(#pb)"/></svg>
      <div class="absolute bottom-0 left-[7px] flex h-[10px] w-[23px] items-center justify-center rounded-[3px] bg-[#ffc814] text-[8px] leading-none font-bold tracking-[0.4px] text-black">PRE</div>
    </div>
  </div>
</footer>
</body>
</html>
